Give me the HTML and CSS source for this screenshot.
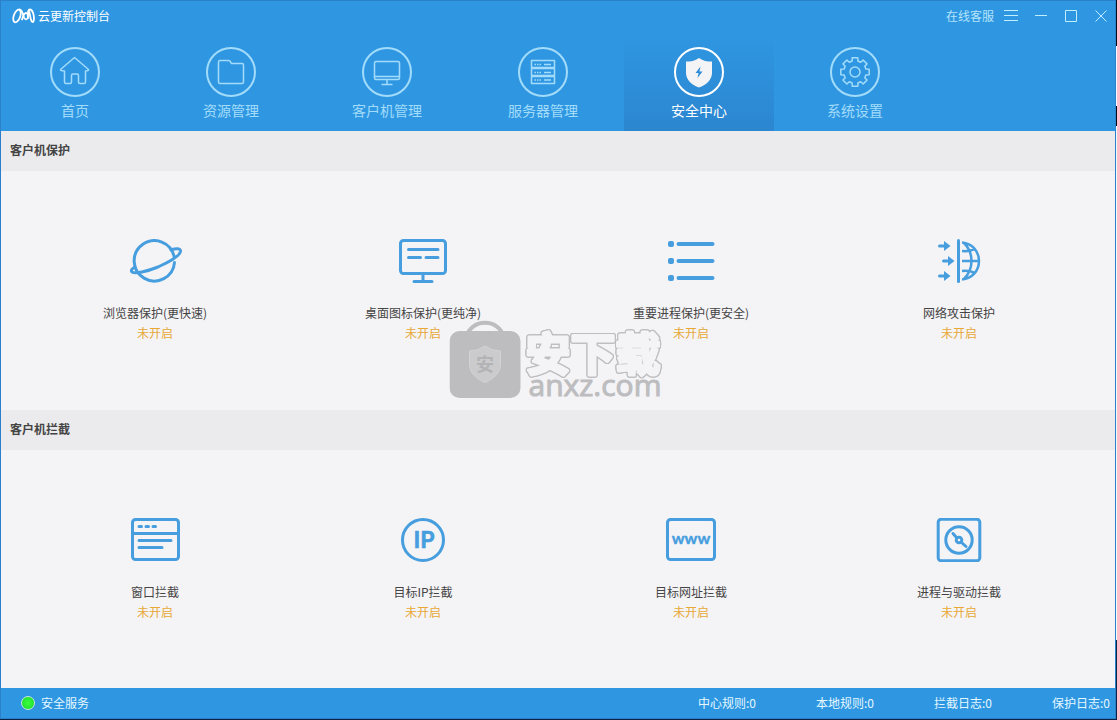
FILE: index.html
```html
<!DOCTYPE html>
<html lang="zh-CN">
<head>
<meta charset="utf-8">
<title>云更新控制台</title>
<link rel="stylesheet" href="styles.css">
</head>
<body>
<div class="window">
  <header class="header">
    <div class="titlebar">
      <svg class="logo" width="24" height="16" viewBox="0 0 24 16" aria-hidden="true">
        <ellipse cx="5" cy="8" rx="3.2" ry="6.600" transform="rotate(20 5 8)"/>
        <path d="M7.500 1.500C10 1.500 10.500 5 12 9.500C13 12 15.500 12 16 9C16.300 6.500 15.500 5 14 5C12 5 11 8.500 10 11.500"/>
        <path d="M16 10C15.500 5 16 1.500 18 1.500C20.500 1.500 22 7 22 10.500C22 14.500 20.500 15 19.300 12.500C18 9.500 18 6 17 3"/>
      </svg>
      <h1 class="app-name">云更新控制台</h1>
      <a class="support" href="#">在线客服</a>
      <button class="win-button" aria-label="菜单"><svg width="16" height="16" viewBox="0 0 16 16"><path d="M1 2.500H15M1 7.500H15M1 12.500H15"/></svg></button>
      <button class="win-button" aria-label="最小化"><svg width="16" height="16" viewBox="0 0 16 16"><path d="M2 7.500H14"/></svg></button>
      <button class="win-button" aria-label="最大化"><svg width="16" height="16" viewBox="0 0 16 16"><path d="M2.500 2.500H13.500V13.500H2.500Z"/></svg></button>
      <button class="win-button" aria-label="关闭"><svg width="16" height="16" viewBox="0 0 16 16"><path d="M2.500 2.500L13.500 13.500M13.500 2.500L2.500 13.500"/></svg></button>
    </div>
    <nav class="nav">
      <button class="nav-item">
        <svg class="nav-icon" width="50" height="50" viewBox="0 0 50 50"><circle class="ring" cx="25" cy="25" r="24"/><path d="M24.500 10.500L38.500 22.500Q38.500 24 35.500 24V35Q35.500 36.500 34 36.500H30Q28.500 36.500 28.500 35V28.500Q28.500 27 27 27H23Q21.500 27 21.500 28.500V35Q21.500 36.500 20 36.500H16Q14.500 36.500 14.500 35V24Q10.500 24 10.500 22.500Z"/></svg>
        <span>首页</span>
      </button>
      <button class="nav-item">
        <svg class="nav-icon" width="50" height="50" viewBox="0 0 50 50"><circle class="ring" cx="25" cy="25" r="24"/><path d="M14 13.500H22.500Q24 13.500 24.500 15L25.500 16.500H36Q37.500 16.500 37.500 18V35Q37.500 36.500 36 36.500H14Q12.500 36.500 12.500 35V15Q12.500 13.500 14 13.500Z"/></svg>
        <span>资源管理</span>
      </button>
      <button class="nav-item">
        <svg class="nav-icon" width="50" height="50" viewBox="0 0 50 50"><circle class="ring" cx="25" cy="25" r="24"/><rect x="12.500" y="14.500" width="25" height="18" rx="1.500"/><path d="M12.500 29.500H37.500M25 32.500V37M19.500 37.500H30.500"/></svg>
        <span>客户机管理</span>
      </button>
      <button class="nav-item">
        <svg class="nav-icon" width="50" height="50" viewBox="0 0 50 50"><circle class="ring" cx="25" cy="25" r="24"/><path d="M13.500 13.500H36.500V20.500H13.500ZM13.500 21.500H36.500V28.500H13.500ZM13.500 29.500H36.500V36.500H13.500ZM26 17.500H33M26 25.500H33M26 33H33"/><path stroke-dasharray="1.500 1" d="M16.500 17.500H23M16.500 25.500H23M16.500 33H23"/></svg>
        <span>服务器管理</span>
      </button>
      <button class="nav-item active" aria-current="page">
        <svg class="nav-icon" width="50" height="50" viewBox="0 0 50 50"><circle class="ring" cx="25" cy="25" r="24"/><path class="shield" d="M25 11C29 14 33.500 14.500 38 14.500V26C38 33 32 38 25 40.500C18 38 12 33 12 26V14.500C16.500 14.500 21 14 25 11Z"/><path class="bolt" d="M26.500 19.500L21.500 26H24.500L23.500 31L28.500 24.500H25.500Z"/></svg>
        <span>安全中心</span>
      </button>
      <button class="nav-item">
        <svg class="nav-icon" width="50" height="50" viewBox="0 0 50 50"><circle class="ring" cx="25" cy="25" r="24"/><g transform="translate(25 25)"><path d="M14.2-2.8V2.8L11 2.9L9.8 5.7L12 8.1L8.1 12L5.7 9.8L2.9 11L2.8 14.2H-2.8L-2.9 11L-5.7 9.8L-8.1 12L-12 8.1L-9.8 5.7L-11 2.9L-14.2 2.8V-2.8L-11-2.9L-9.8-5.7L-12-8.1L-8.1-12L-5.7-9.8L-2.9-11L-2.8-14.2H2.8L2.9-11L5.7-9.8L8.1-12L12-8.1L9.8-5.7L11-2.9Z"/><circle r="5"/></g></svg>
        <span>系统设置</span>
      </button>
    </nav>
  </header>

  <main class="main">
    <section class="group">
      <h2 class="group-title">客户机保护</h2>
      <div class="cards">
        <button class="card">
          <svg class="card-icon" width="56" height="44" viewBox="0 0 56 44"><path d="M47.500 23.500A20.200 20.200 0 1 1 47.200 18"/><path d="M44 11C49 9 54 9 53.500 12.500C52.500 17 41 23.500 31 28C20 32.500 8 35 5 33C3.500 31.500 5 29.500 8 28"/></svg>
          <span class="card-name">浏览器保护(更快速)</span>
          <span class="card-state">未开启</span>
        </button>
        <button class="card">
          <svg class="card-icon" width="56" height="44" viewBox="0 0 56 44"><rect x="5.500" y="1.500" width="45" height="33" rx="3"/><path d="M13.500 10.500H43M13.500 18.500H25.500M31 18.500H43M28 35V42M19 42.500H37"/></svg>
          <span class="card-name">桌面图标保护(更纯净)</span>
          <span class="card-state">未开启</span>
        </button>
        <button class="card">
          <svg class="card-icon" width="56" height="44" viewBox="0 0 56 44"><g class="solid"><rect x="5" y="2" width="6" height="6" rx="2"/><rect x="5" y="19" width="6" height="6" rx="2"/><rect x="5" y="36" width="6" height="6" rx="2"/></g><path class="thick" d="M15.500 5H49.500M15.500 22H49.500M15.500 39H49.500"/></svg>
          <span class="card-name">重要进程保护(更安全)</span>
          <span class="card-state">未开启</span>
        </button>
        <button class="card">
          <svg class="card-icon" width="56" height="44" viewBox="0 0 56 44"><path d="M27.500 1.500V42.500"/><path class="globe" d="M31 3.500C41 4.500 48 12 48 22C48 32 41 39.500 31 40.500M33 4C43 14 43 30 33 40M31 22H47M31 12C36 12.500 41 11.500 44 9.500M31 32C36 31.500 41 32.500 44 34.500"/><path d="M8.500 7H14M12.500 22H18M8.500 37H14"/><path class="solid" d="M13 2L19.500 7L13 12ZM17 17L23.500 22L17 27ZM13 32L19.500 37L13 42Z"/></svg>
          <span class="card-name">网络攻击保护</span>
          <span class="card-state">未开启</span>
        </button>
      </div>
    </section>

    <section class="group">
      <h2 class="group-title">客户机拦截</h2>
      <div class="cards">
        <button class="card">
          <svg class="card-icon" width="56" height="44" viewBox="0 0 56 44"><rect x="5.500" y="1.500" width="46" height="40" rx="3"/><path d="M6 15.500H51M12 8.500H14.500M19 8.500H21.500M26 8.500H28.500M12 22.500H44M12 29.500H35"/></svg>
          <span class="card-name">窗口拦截</span>
          <span class="card-state">未开启</span>
        </button>
        <button class="card">
          <svg class="card-icon" width="56" height="44" viewBox="0 0 56 44"><circle cx="28" cy="22" r="20.500"/><text class="icon-ip" x="29" y="30">IP</text></svg>
          <span class="card-name">目标IP拦截</span>
          <span class="card-state">未开启</span>
        </button>
        <button class="card">
          <svg class="card-icon" width="56" height="44" viewBox="0 0 56 44"><rect x="4.500" y="1.500" width="47" height="40" rx="3"/><text class="icon-www" x="28" y="26">www</text></svg>
          <span class="card-name">目标网址拦截</span>
          <span class="card-state">未开启</span>
        </button>
        <button class="card">
          <svg class="card-icon" width="56" height="44" viewBox="0 0 56 44"><rect x="7.200" y="1.200" width="41.600" height="41.600" rx="3"/><circle cx="28" cy="22" r="13.200"/><circle cx="28" cy="22" r="2.800"/><path d="M22 15.500L25.500 19.500M30.500 24.500L35 28.500"/></svg>
          <span class="card-name">进程与驱动拦截</span>
          <span class="card-state">未开启</span>
        </button>
      </div>
    </section>

    <div class="watermark">
      <svg width="72" height="80" viewBox="0 0 72 80" aria-hidden="true">
        <path class="bag-handle" d="M17.500 18A18.200 15.500 0 0 1 53.500 18"/>
        <rect class="bag" x="0" y="13" width="71" height="67" rx="10"/>
        <path class="bag-shield" d="M35.500 28Q43 33 51 33V46C51 55 44 61 35.500 64.500C27 61 20 55 20 46V33Q28 33 35.500 28Z"/>
        <text class="bag-text" x="35.500" y="53">安</text>
      </svg>
      <div class="wordmark">
        <svg width="142" height="46" viewBox="0 0 142 46"><text class="wordmark-name" x="1" y="41">安下载</text></svg>
        <span class="wordmark-site">anxz.com</span>
      </div>
    </div>
  </main>

  <footer class="statusbar">
    <span class="lamp"></span>
    <span class="service">安全服务</span>
    <ul class="counters">
      <li>中心规则:0</li>
      <li>本地规则:0</li>
      <li>拦截日志:0</li>
      <li>保护日志:0</li>
    </ul>
  </footer>
</div>
</body>
</html>
```

FILE: styles.css
```css
* {
  box-sizing: border-box;
}

body {
  margin: 0;
  padding: 0 1px 1px 0;
  min-height: 100vh;
  display: flex;
  background: linear-gradient(#050d20 0 46px, #f4fbff 46px 106px, #050d20 106px 126px, #f4fbff 126px 640px, #0b2347 640px);
  font: 12px/20px "Noto Sans CJK SC", sans-serif;
  color: #444;
}

button {
  margin: 0;
  padding: 0;
  border: 0;
  background: none;
  font: inherit;
  color: inherit;
  cursor: pointer;
}

svg {
  display: block;
  fill: none;
  stroke: currentColor;
}

.window {
  flex: 1;
  display: flex;
  flex-direction: column;
  border: 1px solid #2b80ca;
  background: #f4f3f6;
}

.header {
  background: #2f97e2;
  color: #fff;
}

.titlebar {
  display: flex;
  align-items: center;
  height: 30px;
  margin-right: -1px;
  padding-left: 11px;
}

.logo {
  stroke-width: 1.8;
  stroke-linecap: round;
}

.app-name {
  margin: 0 auto 0 2px;
  font-size: 12px;
  font-weight: 400;
}

.support {
  margin-right: 2px;
  color: #b5e4fb;
  text-decoration: none;
}

.win-button {
  display: flex;
  align-items: center;
  justify-content: center;
  width: 30px;
  height: 28px;
  color: #c0f0ff;
}

.nav {
  display: flex;
  gap: 6px;
  margin-left: -1px;
}

.nav-item {
  display: flex;
  flex-direction: column;
  align-items: center;
  gap: 3px;
  width: 150px;
  height: 100px;
  padding-top: 16px;
  font-size: 14px;
  color: #a2dcfa;
}

.nav-item.active {
  background: linear-gradient(#2f97e2, #2c86d0);
  color: #fff;
}

.nav-icon {
  stroke-width: 1.5;
  stroke-linejoin: round;
}

.ring {
  stroke-width: 2;
}

.shield {
  fill: #f4f3f6;
  stroke: none;
}

.bolt {
  fill: #2d8cd7;
  stroke: none;
}

.main {
  position: relative;
  flex: 1;
  display: flex;
  flex-direction: column;
}

.group {
  flex: 1;
  display: flex;
  flex-direction: column;
}

.group-title {
  margin: 0;
  padding: 9px 9px 11px;
  background: #ebeaec;
  font-size: 12px;
  font-weight: 700;
}

.cards {
  flex: 1;
  display: grid;
  grid-template-columns: repeat(4, 1fr);
  padding: 2px 22px 0 20px;
}

.card {
  display: flex;
  flex-direction: column;
  align-items: center;
  justify-content: center;
}

.card-icon {
  margin-bottom: 20px;
  color: #469edf;
  stroke-width: 3;
  stroke-linecap: round;
  stroke-linejoin: round;
}

.thick {
  stroke-width: 4;
}

.globe {
  stroke-width: 2.5;
  stroke-linecap: butt;
}

.solid {
  fill: currentColor;
  stroke: none;
}

.icon-ip,
.icon-www {
  font-family: Lato, sans-serif;
  font-weight: 700;
  text-anchor: middle;
  fill: currentColor;
}

.icon-ip {
  font-size: 23px;
  stroke-width: 0.6;
}

.icon-www {
  font-size: 16px;
  stroke-width: 0.4;
}

.card-state {
  color: #e8a835;
}

.watermark {
  position: absolute;
  top: 187px;
  left: 50%;
  transform: translateX(-50%);
  display: flex;
  gap: 3px;
  color: #bdbdbf;
  pointer-events: none;
}

.bag-handle {
  stroke-width: 4;
}

.bag {
  fill: currentColor;
  stroke: none;
}

.bag-shield {
  fill: #cbcbcd;
  stroke: #d3d3d5;
}

.bag-text {
  font-size: 18px;
  font-weight: 700;
  text-anchor: middle;
  fill: #b3b3b5;
  stroke: none;
}

.wordmark {
  display: flex;
  flex-direction: column;
  padding-top: 12px;
}

.wordmark svg {
  overflow: visible;
  filter: drop-shadow(1px 0 #bdbdbf) drop-shadow(-1px 0 #bdbdbf) drop-shadow(0 1px #bdbdbf) drop-shadow(0 -1px #bdbdbf);
}

.wordmark-name {
  font-size: 45px;
  font-weight: 700;
  fill: #f4f3f6;
  stroke: #f4f3f6;
  stroke-width: 3;
  stroke-linejoin: round;
}

.wordmark-site {
  padding-left: 4px;
  font: 30px/18px "Open Sans", sans-serif;
  -webkit-text-stroke: 1px currentColor;
}

.statusbar {
  display: flex;
  align-items: center;
  height: 30px;
  padding: 0 5px 0 20px;
  background: #2f97e2;
  color: #e4f7ff;
}

.lamp {
  width: 14px;
  height: 14px;
  margin-right: 6px;
  border: 1px solid #c5e8d8;
  border-radius: 50%;
  background: radial-gradient(#3dff3d, #14d72a);
}

.counters {
  display: flex;
  gap: 60px;
  margin: 0 0 0 auto;
  padding: 0;
  list-style: none;
}
```
